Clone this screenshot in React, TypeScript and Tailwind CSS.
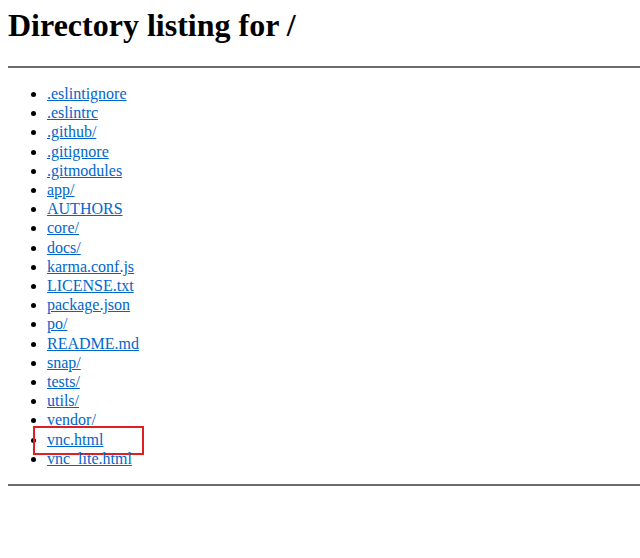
import React from "react";

const items = [
  ".eslintignore",
  ".eslintrc",
  ".github/",
  ".gitignore",
  ".gitmodules",
  "app/",
  "AUTHORS",
  "core/",
  "docs/",
  "karma.conf.js",
  "LICENSE.txt",
  "package.json",
  "po/",
  "README.md",
  "snap/",
  "tests/",
  "utils/",
  "vendor/",
  "vnc.html",
  "vnc_lite.html",
];

export default function App() {
  return (
    <div
      className="relative min-h-[558px] w-[640px] overflow-hidden bg-white px-2 text-black"
      style={{ fontFamily: '"Liberation Serif", "Times New Roman", serif' }}
    >
      <h1 className="pt-[7px] text-[32px] font-bold leading-[37px]">Directory listing for /</h1>
      <hr className="mt-[22px] w-[640px] border-t-2 border-[#6b6b6b]" />
      <ul className="mt-[16px] mb-[16px] list-disc pl-[39px] text-[16px] leading-[19.2px]">
        {items.map((name) => (
          <li key={name} className="relative">
            <a href="#" className="text-[#0066cc] underline">
              {name}
            </a>
            {name === "vnc.html" && (
              <span className="absolute left-[-14px] top-[-4px] h-[29px] w-[111px] border-2 border-[#e02020]" />
            )}
          </li>
        ))}
      </ul>
      <hr className="w-[640px] border-t-2 border-[#6b6b6b]" />
    </div>
  );
}
